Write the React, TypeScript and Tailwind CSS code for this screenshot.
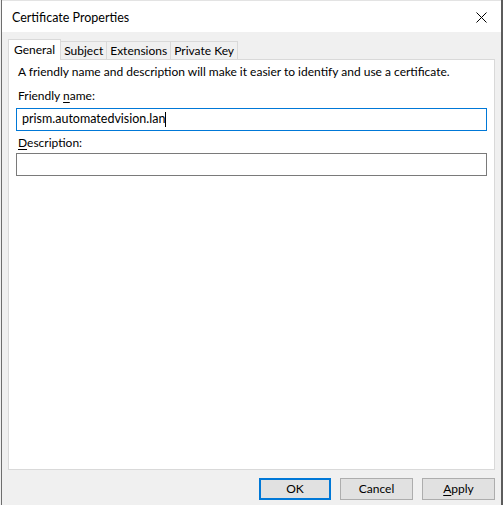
import React from 'react';

const font = { fontFamily: 'Lato, "Noto Sans", "Liberation Sans", sans-serif' };

function Tab({ label, active }: { label: string; active?: boolean }) {
  if (active) {
    return (
      <div className="relative z-10 -mb-px h-[21px] bg-white border border-b-0 border-[#d9d9d9] px-[5px] leading-[19px]">
        {label}
      </div>
    );
  }
  return (
    <div className="mt-[2px] h-[18px] border border-b-0 border-l-0 border-[#d9d9d9] px-[3px] leading-[17px]">
      {label}
    </div>
  );
}

function Button({ children, focused }: { children: React.ReactNode; focused?: boolean }) {
  return (
    <button
      className={
        focused
          ? 'w-[72px] h-[22px] bg-[#e1e1e1] border-2 border-[#0078d7] leading-[18px]'
          : 'w-[73px] h-[22px] bg-[#e1e1e1] border border-[#adadad] leading-[20px]'
      }
    >
      {children}
    </button>
  );
}

export default function App() {
  return (
    <div className="w-[503px] h-[505px] flex bg-[#f0f0f0] text-[12px] text-black" style={font}>
      {/* dialog window */}
      <div className="w-[500px] h-full ml-px flex flex-col border-l border-[#6e6e6e]">
        {/* title bar */}
        <div className="h-[32px] bg-white border-t border-[#e3e3e3] flex items-center justify-between pl-[10px] pr-[14px]">
          <span className="text-[12.5px] mt-[3px]">Certificate Properties</span>
          <svg width="11" height="11" viewBox="0 0 11 11" className="mt-[2px]">
            <path d="M0.5 0.5 L10.5 10.5 M10.5 0.5 L0.5 10.5" stroke="#000" strokeWidth="1" />
          </svg>
        </div>

        {/* body */}
        <div className="flex-1 flex flex-col bg-[#f0f0f0] pl-[6px] pr-[6px] pt-[7px]">
          {/* tabs */}
          <div className="flex items-start h-[20px]">
            <Tab label="General" active />
            <Tab label="Subject" />
            <Tab label="Extensions" />
            <Tab label="Private Key" />
          </div>

          {/* tab panel */}
          <div className="h-[411px] bg-white border border-[#d9d9d9] px-[7px] pt-[4px]">
            <div className="pl-[2px] leading-[16px]">
              A friendly name and description will make it easier to identify and use a certificate.
            </div>
            <div className="pl-[2px] mt-[8px] leading-[16px]">
              Friendly <span className="underline underline-offset-2">n</span>ame:
            </div>
            <div className="mt-[4px] h-[23px] border border-[#0078d7] px-[5px] flex items-center text-[12.5px]">
              <span>prism.automatedvision.lan</span>
              <span className="w-px h-[15px] bg-black" />
            </div>
            <div className="pl-[2px] mt-[4px] leading-[16px]">
              <span className="underline underline-offset-2">D</span>escription:
            </div>
            <div className="mt-[2px] h-[23px] border border-[#7a7a7a]" />
          </div>

          {/* buttons */}
          <div className="flex justify-end gap-[9px] mt-[8px]">
            <Button focused>OK</Button>
            <Button>Cancel</Button>
            <Button>
              <span className="underline underline-offset-2">A</span>pply
            </Button>
          </div>
        </div>
      </div>
      <div className="w-[2px] h-full bg-[#5c5c5c]" />
    </div>
  );
}
